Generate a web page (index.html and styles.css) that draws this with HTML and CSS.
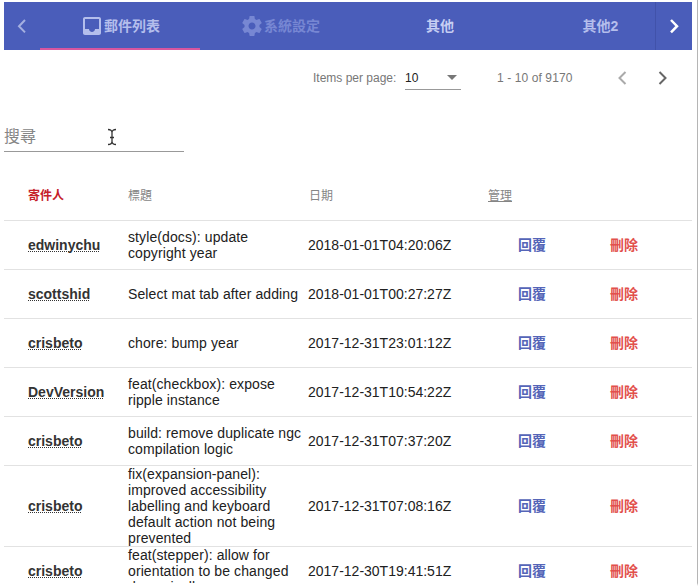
FILE: index.html
```html
<!DOCTYPE html>
<html lang="zh-Hant">
<head>
<meta charset="utf-8">
<title>郵件列表</title>
<link rel="stylesheet" href="styles.css">
</head>
<body>
<main class="page">
  <nav class="tabs">
    <button class="pager-btn prev" aria-label="prev"><svg width="10" height="16" viewBox="0 0 10 16"><path d="M8 2L2 8.200L8 14.400"/></svg></button>
    <div class="tab active"><svg class="icon" viewBox="0 0 24 24"><path d="M19 3H4.990c-1.110 0-1.980.890-1.980 2L3 19c0 1.100.880 2 1.990 2H19c1.100 0 2-.9 2-2V5c0-1.110-.9-2-2-2zm0 12h-4c0 1.660-1.350 3-3 3s-3-1.340-3-3H4.990V5H19v10z"/></svg><span>郵件列表</span></div>
    <div class="tab disabled"><svg class="icon" viewBox="0 0 24 24"><path d="M19.430 12.980c.04-.32.07-.64.07-.98s-.03-.66-.07-.98l2.110-1.650c.19-.15.24-.42.12-.64l-2-3.460c-.12-.22-.39-.3-.61-.22l-2.490 1c-.52-.4-1.080-.73-1.690-.98l-.38-2.650C14.460 2.180 14.250 2 14 2h-4c-.25 0-.46.18-.49.42l-.38 2.650c-.61.25-1.170.59-1.690.98l-2.490-1c-.23-.09-.49 0-.61.22l-2 3.460c-.13.22-.07.49.12.64l2.110 1.650c-.04.32-.07.65-.07.98s.03.66.07.98l-2.110 1.650c-.19.15-.24.42-.12.64l2 3.460c.12.22.39.3.61.22l2.490-1c.52.4 1.080.73 1.690.98l.38 2.650c.03.24.24.42.49.42h4c.25 0 .46-.18.49-.42l.38-2.650c.61-.25 1.170-.59 1.690-.98l2.490 1c.23.09.49 0 .61-.22l2-3.460c.12-.22.07-.49-.12-.64l-2.110-1.650zM12 15.500c-1.930 0-3.500-1.570-3.500-3.500s1.570-3.500 3.500-3.500 3.500 1.570 3.500 3.500-1.570 3.500-3.500 3.500z"/></svg><span>系統設定</span></div>
    <div class="tab plain"><span>其他</span></div>
    <div class="tab last"><span>其他2</span></div>
    <button class="pager-btn next" aria-label="next"><svg width="10" height="16" viewBox="0 0 10 16"><path d="M2 2L8 8.200L2 14.400"/></svg></button>
  </nav>

  <div class="paginator">
    <span class="label">Items per page:</span>
    <span class="select">10<i class="arrow"></i></span>
    <span class="range">1 - 10 of 9170</span>
    <svg class="chev off" width="12" height="16" viewBox="0 0 12 16"><path d="M9.500 2L3.500 8L9.500 14"/></svg>
    <svg class="chev" width="12" height="16" viewBox="0 0 12 16"><path d="M2.500 2L8.500 8L2.500 14"/></svg>
  </div>

  <div class="search">搜尋
    <svg class="cursor" width="10" height="18" viewBox="0 0 10 18"><path d="M1 1.500C3.500 1.500 5 2.500 5 4.500V13.500C5 15.500 3.500 16.500 1 16.500M9 1.500C6.500 1.500 5 2.500 5 4.500M9 16.500C6.500 16.500 5 15.500 5 13.500M3 9.500H7"/></svg>
  </div>

  <section class="table">
    <div class="row head"><span class="sender">寄件人</span><span>標題</span><span class="date">日期</span><span><u>管理</u></span></div>
    <div class="row"><span class="user">edwinychu</span><span class="title">style(docs): update copyright year</span><span>2018-01-01T04:20:06Z</span><span class="actions"><b>回覆</b><b class="warn">刪除</b></span></div>
    <div class="row"><span class="user">scottshid</span><span class="title">Select mat tab after adding</span><span>2018-01-01T00:27:27Z</span><span class="actions"><b>回覆</b><b class="warn">刪除</b></span></div>
    <div class="row"><span class="user">crisbeto</span><span class="title">chore: bump year</span><span>2017-12-31T23:01:12Z</span><span class="actions"><b>回覆</b><b class="warn">刪除</b></span></div>
    <div class="row"><span class="user">DevVersion</span><span class="title">feat(checkbox): expose ripple instance</span><span>2017-12-31T10:54:22Z</span><span class="actions"><b>回覆</b><b class="warn">刪除</b></span></div>
    <div class="row"><span class="user">crisbeto</span><span class="title">build: remove duplicate ngc compilation logic</span><span>2017-12-31T07:37:20Z</span><span class="actions"><b>回覆</b><b class="warn">刪除</b></span></div>
    <div class="row"><span class="user">crisbeto</span><span class="title">fix(expansion-panel): improved accessibility labelling and keyboard default action not being prevented</span><span>2017-12-31T07:08:16Z</span><span class="actions"><b>回覆</b><b class="warn">刪除</b></span></div>
    <div class="row"><span class="user">crisbeto</span><span class="title">feat(stepper): allow for orientation to be changed dynamically</span><span>2017-12-30T19:41:51Z</span><span class="actions"><b>回覆</b><b class="warn">刪除</b></span></div>
  </section>
</main>
</body>
</html>
```
FILE: styles.css
```css
* { box-sizing: border-box; }
body {
  margin: 0;
  background: #fff;
  color: #212121;
  font: 14px/16px "Liberation Sans", "Noto Sans CJK TC", sans-serif;
}
.page {
  width: 698px;
  height: 586px;
  padding: 2px 5px 0 4px;
  border-right: 1px solid #b5b5b5;
  border-bottom: 3px solid #fff;
  overflow: hidden;
}
.tabs {
  display: flex;
  width: 688px;
  height: 48px;
  background: #4a5dba;
  color: #b4beec;
}
.pager-btn {
  display: flex;
  align-items: center;
  justify-content: center;
  width: 36px;
  padding: 0;
  border: 0;
  background: none;
}
.pager-btn svg { fill: none; stroke: #a4afe0; stroke-width: 2; }
.pager-btn.next { width: 37px; border-left: 1px solid #4152aa; }
.pager-btn.next svg { stroke: #fff; stroke-width: 2.500; }
.tab {
  display: flex;
  align-items: center;
  justify-content: center;
  width: 160px;
  font-weight: 700;
}
.tab.active { border-bottom: 2px solid #d8569f; padding-top: 2px; }
.tab.disabled { color: #7787d3; }
.tab.plain { color: #c6cef3; }
.tab.last { flex: 1; padding-left: 26px; }
.icon { width: 24px; height: 24px; fill: currentColor; }
.paginator {
  display: flex;
  align-items: center;
  height: 56px;
  padding-left: 309px;
  color: #777;
  font-size: 12px;
}
.label { width: 92px; white-space: nowrap; }
.select {
  display: flex;
  align-items: center;
  justify-content: space-between;
  width: 56px;
  height: 23px;
  border-bottom: 1px solid #999;
  color: #212121;
}
.paginator > * { flex-shrink: 0; }
.arrow {
  margin-right: 4px;
  border: 5px solid transparent;
  border-top-color: #777;
  border-bottom: 0;
}
.range { width: 119px; margin-left: 36px; white-space: nowrap; letter-spacing: 0.1px; }
.chev { margin-right: 29px; fill: none; stroke: #666; stroke-width: 2; }
.chev.off { stroke: #aaa; }
.search {
  position: relative;
  width: 180px;
  height: 32px;
  margin-top: 14px;
  border-bottom: 1px solid #999;
  color: #858585;
  font-size: 16px;
  line-height: 33px;
}
.cursor {
  position: absolute;
  left: 103px;
  top: 8px;
  fill: none;
  stroke: #333;
  stroke-width: 1.300;
}
.table { margin-top: 20px; }
.row {
  display: grid;
  grid-template-columns: 100px 180px 180px 1fr;
  align-items: center;
  width: 688px;
  min-height: 49px;
  padding-left: 24px;
  border-bottom: 1px solid #e2e2e2;
}
.title { padding-right: 4px; letter-spacing: 0.1px; }
.head { color: #858585; font-size: 12px; }
.row.head { height: 49px; }
.head .date { padding-left: 1px; }
.sender { color: #c5202b; font-weight: 700; }
.user {
  color: #333;
  font-weight: 700;
  text-decoration: underline dotted 1px;
  text-underline-offset: 1px;
}
.actions { display: flex; gap: 64px; padding-left: 30px; }
.actions b { color: #5565b8; font-weight: 700; }
.actions .warn { color: #e2504c; }
```
